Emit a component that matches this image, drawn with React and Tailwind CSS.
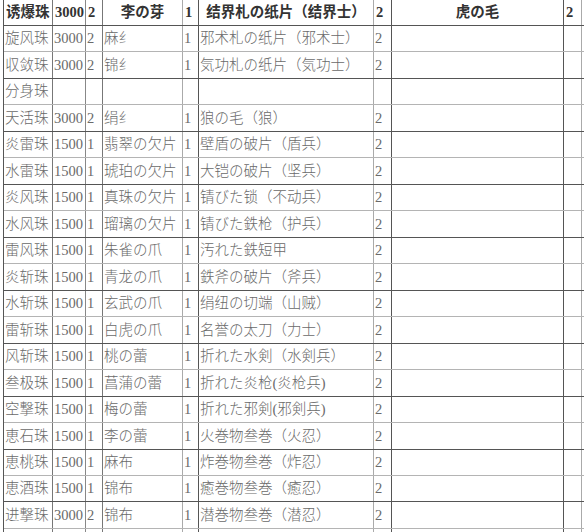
import React from 'react';

const cols = [
    { w: 'w-[49px]', line: 'border-[#777]' },
    { w: 'w-[33px]', line: 'border-[#888]' },
    { w: 'w-[17px]', line: 'border-[#777]' },
    { w: 'w-[80px]', line: 'border-[#aaa]' },
    { w: 'w-[16px]', line: 'border-[#555]' },
    { w: 'w-[175px]', line: 'border-[#aaa]' },
    { w: 'w-[18px]', line: 'border-[#555]' },
    { w: 'w-[172px]', line: 'border-[#555]' },
    { w: 'w-[18px]', line: 'border-[#aaa]' },
];

const header = ['诱爆珠', '3000', '2', '李の芽', '1', '结界札の纸片（结界士）', '2', '虎の毛', '2'];

const rows = [
    ['旋风珠', '3000', '2', '麻纟', '1', '邪术札の纸片（邪术士）', '2'],
    ['収敛珠', '3000', '2', '锦纟', '1', '気功札の纸片（気功士）', '2'],
    ['分身珠', '', '', '', '', '', ''],
    ['天活珠', '3000', '2', '绢纟', '1', '狼の毛（狼）', '2'],
    ['炎雷珠', '1500', '1', '翡翠の欠片', '1', '壁盾の破片（盾兵）', '2'],
    ['水雷珠', '1500', '1', '琥珀の欠片', '1', '大铠の破片（坚兵）', '2'],
    ['炎风珠', '1500', '1', '真珠の欠片', '1', '锖びた锁（不动兵）', '2'],
    ['水风珠', '1500', '1', '瑠璃の欠片', '1', '锖びた鉄枪（护兵）', '2'],
    ['雷风珠', '1500', '1', '朱雀の爪', '1', '汚れた鉄短甲', '2'],
    ['炎斩珠', '1500', '1', '青龙の爪', '1', '鉄斧の破片（斧兵）', '2'],
    ['水斩珠', '1500', '1', '玄武の爪', '1', '绢纽の切端（山贼）', '2'],
    ['雷斩珠', '1500', '1', '白虎の爪', '1', '名誉の太刀（力士）', '2'],
    ['风斩珠', '1500', '1', '桃の蕾', '1', '折れた水剣（水剣兵）', '2'],
    ['叁极珠', '1500', '1', '菖蒲の蕾', '1', '折れた炎枪(炎枪兵)', '2'],
    ['空撃珠', '1500', '1', '梅の蕾', '1', '折れた邪剣(邪剣兵)', '2'],
    ['恵石珠', '1500', '1', '李の蕾', '1', '火巻物叁巻（火忍）', '2'],
    ['恵桃珠', '1500', '1', '麻布', '1', '炸巻物叁巻（炸忍）', '2'],
    ['恵酒珠', '1500', '1', '锦布', '1', '癒巻物叁巻（癒忍）', '2'],
    ['进撃珠', '3000', '2', '锦布', '1', '潜巻物叁巻（潜忍）', '2'],
    ['', '', '', '', '', '', ''],
];

export default function App() {
    return (
        <div className="w-[584px] h-[532px] overflow-hidden bg-white font-['Liberation_Serif','Noto_Sans_CJK_SC',serif] text-[14.5px] leading-none">
            <div className="ml-[3px] border-l border-[#555]">
                {/* 表头 */}
                <div className="flex h-[26px] border-b border-[#555] font-bold text-[#333]">
                    {header.map((t, i) => (
                        <div
                            key={i}
                            className={`${cols[i].w} ${cols[i].line} border-r shrink-0 flex items-center whitespace-nowrap overflow-hidden ${i === 3 || i === 5 || i === 7 ? 'justify-center' : 'pl-[2px]'}`}
                        >
                            {t}
                        </div>
                    ))}
                </div>

                {rows.map((r, ri) => (
                    <div
                        key={ri}
                        className={`flex h-[26.47px] border-b font-light text-[#6a6a6a] ${ri % 2 === 1 ? 'border-[#555]' : 'border-[#b4b4b4]'}`}
                    >
                        {cols.map((c, ci) => (
                            <div
                                key={ci}
                                className={`${c.w} ${c.line} border-r shrink-0 flex items-center whitespace-nowrap overflow-hidden pl-[1px]`}
                            >
                                {r[ci] || ''}
                            </div>
                        ))}
                    </div>
                ))}
            </div>
        </div>
    );
}
